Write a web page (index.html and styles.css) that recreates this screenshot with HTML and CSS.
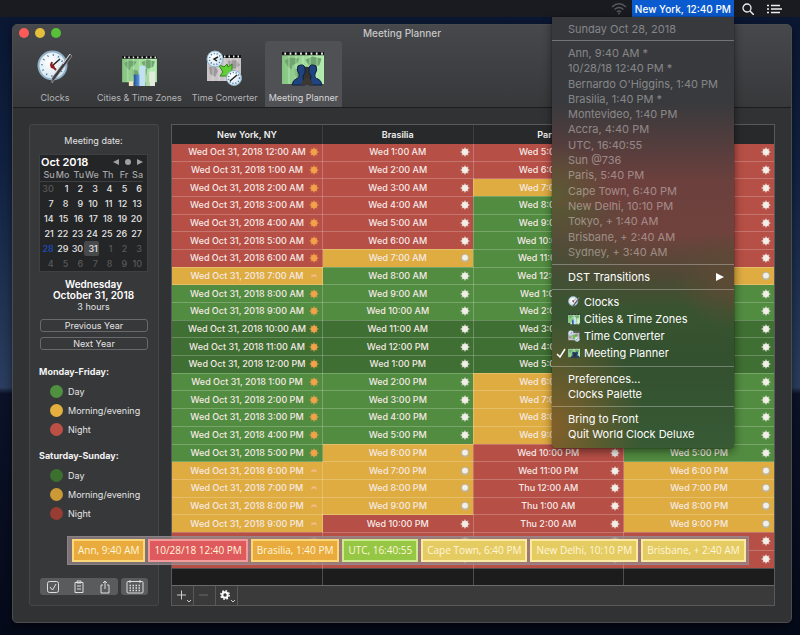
FILE: index.html
```html
<!DOCTYPE html>
<html lang="en">
<head>
    <meta charset="UTF-8">
    <meta name="viewport" content="width=device-width, initial-scale=1.0">
    <title>Meeting Planner</title>
    <link rel="stylesheet" href="styles.css">
</head>
<body>
    <svg class="symbols" aria-hidden="true">
        <linearGradient id="map-fill" x1="0" y1="0" x2="1" y2="0">
            <stop offset="0" stop-color="#86c482"/>
            <stop offset="1" stop-color="#b4edb0"/>
        </linearGradient>
        <linearGradient id="bar-fill" x1="0" y1="0" x2="1" y2="0">
            <stop offset="0" stop-color="#1f4f9a"/>
            <stop offset="1" stop-color="#6fa6e0"/>
        </linearGradient>
        <radialGradient id="clock-fill" cx="0.4" cy="0.35" r="0.7">
            <stop offset="0" stop-color="#ffffff"/>
            <stop offset="1" stop-color="#cfe3ee"/>
        </radialGradient>
        <symbol id="clocks" viewBox="0 0 36 36">
            <circle cx="15.500" cy="15.500" r="14" fill="url(#clock-fill)" stroke="#8fb0c6" stroke-width="2"/>
            <circle cx="15.500" cy="15.500" r="10.500" fill="none" stroke="#42729b" stroke-width="2" stroke-dasharray="1 4.500"/>
            <path d="M15 16l8-7" stroke="#222" stroke-width="1.500"/>
            <path d="M19 20l-5-5 1-3" fill="none" stroke="#8e1f1f" stroke-width="2"/>
            <circle cx="15.500" cy="16.500" r="2" fill="#8e1f1f"/>
            <path d="M33 4l2 2-17 23-3 4 0-5z" fill="#3b3b40" stroke="#9a9aa2" stroke-width="0.800"/>
            <path d="M33 4l-7 10" stroke="#d8d8de" stroke-width="1"/>
        </symbol>
        <symbol id="map" viewBox="0 0 36 30" preserveAspectRatio="none">
            <path d="M0 0h36v29H0z" fill="url(#map-fill)"/>
            <path d="M2 8l5-3 8 1-2 4-4 2-1 4-3-3zM11 15l5 1 1 4-4 6-2-5zM20 7l6-3 8 2-2 6-5 2-4-2zM20 13l6 1-1 8-3 1z" fill="#6fa56e"/>
            <path d="M6 3v26M12 3v26M18 3v26M24 3v26M30 3v26" stroke="#d3f4d0" stroke-width="0.500"/>
            <path d="M0 0h36v3H0z" fill="#111"/>
            <path d="M2 1.500h34" stroke="#eee" stroke-width="2" stroke-dasharray="1.500 3"/>
        </symbol>
        <symbol id="cities" viewBox="0 0 36 32">
            <use href="#map" x="0" y="1" width="36" height="28"/>
            <path d="M7 27h5v5H7z" fill="#f2e2bd"/>
            <path d="M12 20h7v12h-7z" fill="url(#bar-fill)"/>
            <path d="M18 11h6v21h-6z" fill="#c4e0f5"/>
            <path d="M24 21h4v11h-4z" fill="#a9d99f"/>
            <path d="M28 17h6v15h-6z" fill="#e2eadc"/>
        </symbol>
        <symbol id="converter" viewBox="0 0 37 36">
            <path d="M1 5h34v26H1z" fill="#c9c3c6"/>
            <path d="M3 17l6-1 3 5-3 6-5-3zM22 11l8-1 4 5-5 4-6-2z" fill="#9d999b"/>
            <path d="M7 8v23M13 8v23M19 8v23M25 8v23M31 8v23" stroke="#e8e4e6" stroke-width="0.600"/>
            <path d="M1 5h34v3H1z" fill="#111"/>
            <path d="M18 6.500h17" stroke="#eee" stroke-width="2" stroke-dasharray="1.500 3"/>
            <path d="M12 14l6 3 3-3 1 3 4-3v12H14l3-4z" fill="#62cf34" stroke="#2f8418"/>
            <circle cx="9" cy="9" r="8" fill="url(#clock-fill)" stroke="#8fb0c6"/>
            <circle cx="9" cy="9" r="5.500" fill="none" stroke="#42729b" stroke-width="1.500" stroke-dasharray="1 2"/>
            <path d="M12 7L8 9l3 2" fill="none" stroke="#222" stroke-width="1.500"/>
            <circle cx="28" cy="28" r="7.500" fill="url(#clock-fill)" stroke="#8fb0c6"/>
            <circle cx="28" cy="28" r="5.500" fill="none" stroke="#42729b" stroke-width="1.500" stroke-dasharray="1 2"/>
            <path d="M24 31l7-6" stroke="#222" stroke-width="1.500"/>
        </symbol>
        <symbol id="planner" viewBox="0 0 42 34">
            <use href="#map" x="0" y="0" width="42" height="33"/>
            <path d="M21 15h8l1 18H20z" fill="#35332f"/>
            <path d="M16 14q6-3 7 2 1 5-2 8 0 5 2 9H10q1-5 4-6 4-1 3-5-3-4-1-8z" fill="#1f4480" stroke="#10203c"/>
            <path d="M34 14q-6-3-7 2-1 5 2 8 0 5-2 9h13q-1-5-4-6-4-1-3-5 3-4 1-8z" fill="#1f4480" stroke="#10203c"/>
            <path d="M19 33q2-7 6-7t6 7z" fill="#3d3833"/>
        </symbol>
        <symbol id="sun" viewBox="0 0 12 12">
            <path d="M6 0L7.500 2.500 10.200 1.800 9.500 4.500 12 6 9.500 7.500 10.200 10.200 7.500 9.500 6 12 4.500 9.500 1.800 10.200 2.500 7.500 0 6 2.500 4.500 1.800 1.800 4.500 2.500z" fill="currentColor" opacity="0.700"/>
            <circle cx="6" cy="6" r="3.500" fill="currentColor"/>
        </symbol>
        <symbol id="haze" viewBox="0 0 12 12">
            <circle cx="6" cy="6" r="5" fill="#bdb59c"/>
            <circle cx="6" cy="5.500" r="3.500" fill="currentColor"/>
        </symbol>
        <symbol id="dusk" viewBox="0 0 12 12">
            <path d="M2.500 8q0-4 3.500-4t3.500 4q-3.500-3-7 0z" fill="currentColor"/>
        </symbol>
    </svg>

    <header class="menubar">
        <svg class="wifi" viewBox="0 0 16 13" aria-hidden="true">
            <path d="M1 5q7-6.500 14 0M3.500 7.500q4.500-4 9 0M6 10q2-2 4 0" fill="none" stroke="#55575b" stroke-width="1.500"/>
            <circle cx="8" cy="11.500" r="1" fill="#55575b"/>
        </svg>
        <div class="clock-item">
            <button type="button" class="clock-button">New York, 12:40 PM</button>
            <div class="menu">
                <p class="menu-date">Sunday Oct 28, 2018</p>
                <ul class="menu-times">
                    <li>Ann, 9:40 AM *</li>
                    <li>10/28/18 12:40 PM *</li>
                    <li>Bernardo O'Higgins, 1:40 PM</li>
                    <li>Brasilia, 1:40 PM *</li>
                    <li>Montevideo, 1:40 PM</li>
                    <li>Accra, 4:40 PM</li>
                    <li>UTC, 16:40:55</li>
                    <li>Sun @736</li>
                    <li>Paris, 5:40 PM</li>
                    <li>Cape Town, 6:40 PM</li>
                    <li>New Delhi, 10:10 PM</li>
                    <li>Tokyo, + 1:40 AM</li>
                    <li>Brisbane, + 2:40 AM</li>
                    <li>Sydney, + 3:40 AM</li>
                </ul>
                <div class="menu-group">
                    <button type="button" class="submenu">DST Transitions <svg viewBox="0 0 8 8" aria-hidden="true"><path d="M0 0l8 4-8 4z" fill="#fff"/></svg></button>
                </div>
                <div class="menu-group windows">
                    <button type="button"><svg aria-hidden="true"><use href="#clocks"/></svg>Clocks</button>
                    <button type="button"><svg aria-hidden="true"><use href="#cities"/></svg>Cities &amp; Time Zones</button>
                    <button type="button"><svg aria-hidden="true"><use href="#converter"/></svg>Time Converter</button>
                    <button type="button" class="checked"><svg class="check" viewBox="0 0 10 10" aria-hidden="true"><path d="M1 6l3 3 5-8" fill="none" stroke="#fff" stroke-width="1.500"/></svg><svg aria-hidden="true"><use href="#planner"/></svg>Meeting Planner</button>
                </div>
                <div class="menu-group plain">
                    <button type="button">Preferences...</button>
                    <button type="button">Clocks Palette</button>
                </div>
                <div class="menu-group plain">
                    <button type="button">Bring to Front</button>
                    <button type="button">Quit World Clock Deluxe</button>
                </div>
            </div>
        </div>
        <button type="button" class="bar-icon" aria-label="Search">
            <svg viewBox="0 0 12 12"><circle cx="5" cy="5" r="4" fill="none" stroke="#eee" stroke-width="1.300"/><path d="M8 8l4 4" stroke="#eee" stroke-width="1.500"/></svg>
        </button>
        <button type="button" class="bar-icon list" aria-label="Notifications">
            <svg viewBox="0 0 15 10"><path d="M0 1.500h2M0 5h2M0 8.500h2M4 1.500h9M4 5h11M4 8.500h9" stroke="#eee" stroke-width="1.500"/></svg>
        </button>
    </header>

    <main class="window">
        <div class="titlebar">
            <div class="title-row">
                <div class="lights">
                    <button type="button" class="light close" aria-label="Close"></button>
                    <button type="button" class="light minimize" aria-label="Minimize"></button>
                    <button type="button" class="light zoom" aria-label="Zoom"></button>
                </div>
                <h1>Meeting Planner</h1>
            </div>
            <nav class="tools">
                <button type="button" class="tool first"><svg width="36" height="36" aria-hidden="true"><use href="#clocks"/></svg>Clocks</button>
                <button type="button" class="tool"><svg width="35" height="31" aria-hidden="true"><use href="#cities"/></svg>Cities &amp; Time Zones</button>
                <button type="button" class="tool"><svg width="37" height="36" aria-hidden="true"><use href="#converter"/></svg>Time Converter</button>
                <button type="button" class="tool selected"><svg width="42" height="34" aria-hidden="true"><use href="#planner"/></svg>Meeting Planner</button>
            </nav>
        </div>

        <div class="content">
            <aside class="panel">
                <p class="panel-label">Meeting date:</p>
                <div class="calendar">
                    <div class="month">
                        <b>Oct 2018</b>
                        <button type="button" aria-label="Previous month"><svg viewBox="0 0 6 6"><path d="M6 0v6L0 3z"/></svg></button>
                        <button type="button" aria-label="Today"><svg viewBox="0 0 6 6"><circle cx="3" cy="3" r="3"/></svg></button>
                        <button type="button" aria-label="Next month"><svg viewBox="0 0 6 6"><path d="M0 0v6l6-3z"/></svg></button>
                    </div>
                    <table class="days">
                        <thead>
                            <tr><th>Su</th><th>Mo</th><th>Tu</th><th>We</th><th>Th</th><th>Fr</th><th>Sa</th></tr>
                        </thead>
                        <tbody>
                            <tr><td class="other">30</td><td>1</td><td>2</td><td>3</td><td>4</td><td>5</td><td>6</td></tr>
                            <tr><td>7</td><td>8</td><td>9</td><td>10</td><td>11</td><td>12</td><td>13</td></tr>
                            <tr><td>14</td><td>15</td><td>16</td><td>17</td><td>18</td><td>19</td><td>20</td></tr>
                            <tr><td>21</td><td>22</td><td>23</td><td>24</td><td>25</td><td>26</td><td>27</td></tr>
                            <tr><td class="today">28</td><td>29</td><td>30</td><td class="picked">31</td><td class="other">1</td><td class="other">2</td><td class="other">3</td></tr>
                            <tr><td class="other">4</td><td class="other">5</td><td class="other">6</td><td class="other">7</td><td class="other">8</td><td class="other">9</td><td class="other">10</td></tr>
                        </tbody>
                    </table>
                </div>
                <p class="chosen"><b>Wednesday<br>October 31, 2018</b><br>3 hours</p>
                <button type="button" class="year">Previous Year</button>
                <button type="button" class="year">Next Year</button>

                <h2>Monday-Friday:</h2>
                <ul class="legend">
                    <li class="day">Day</li>
                    <li class="edge">Morning/evening</li>
                    <li class="night">Night</li>
                </ul>
                <h2>Saturday-Sunday:</h2>
                <ul class="legend weekend">
                    <li class="day">Day</li>
                    <li class="edge">Morning/evening</li>
                    <li class="night">Night</li>
                </ul>

                <div class="actions">
                    <div class="segment">
                        <button type="button" aria-label="Reminder"><svg viewBox="0 0 14 14"><rect x="1.500" y="1.500" width="11" height="11" rx="2"/><path d="M4 7l2.500 3L10 4"/></svg></button>
                        <button type="button" aria-label="Copy"><svg viewBox="0 0 14 14"><path d="M3 2.500h8v10H3zM5 1h4v2H5zM5 6h4M5 9h4"/></svg></button>
                        <button type="button" aria-label="Share"><svg viewBox="0 0 14 14"><path d="M5 5H3v8h8V5H9M7 9V1M5 3l2-2 2 2"/></svg></button>
                    </div>
                    <button type="button" class="segment grid" aria-label="Calendar"><svg viewBox="0 0 18 14"><rect x="1" y="1.500" width="16" height="11.500" rx="1"/><path d="M4 0v3M14 0v3"/><path d="M3.500 5.500h12M3.500 8h12M3.500 10.500h12" stroke-width="1.500" stroke-dasharray="1.500 1.500"/></svg></button>
                </div>
            </aside>

            <section class="planner">
                <table class="hours">
                    <thead>
                        <tr><th>New York, NY</th><th>Brasilia</th><th>Paris</th><th></th></tr>
                    </thead>
                    <tbody id="hours"></tbody>
                    <tfoot>
                        <tr><td></td><td></td><td></td><td></td></tr>
                    </tfoot>
                </table>
                <div class="footbar">
                    <button type="button" aria-label="Add city"><svg viewBox="0 0 20 18"><path d="M5 9h9M9.500 4.500v9" stroke="#ccc"/><path d="M15 14l2 2 2-2" fill="none" stroke="#ccc"/></svg></button>
                    <button type="button" aria-label="Remove city"><svg viewBox="0 0 20 18"><path d="M5 9h9" stroke="#6a6a6a"/></svg></button>
                    <button type="button" aria-label="Options"><svg viewBox="0 0 20 18"><circle cx="9" cy="9" r="2.700" fill="none" stroke="#fff" stroke-width="2"/><circle cx="9" cy="9" r="4.200" fill="none" stroke="#fff" stroke-width="1.500" stroke-dasharray="1.650 1.650"/><path d="M15 14l2 2 2-2" fill="none" stroke="#ccc"/></svg></button>
                </div>
            </section>
        </div>
    </main>

    <div class="palette">
        <span class="orange">Ann, 9:40 AM</span>
        <span class="red">10/28/18 12:40 PM</span>
        <span class="orange">Brasilia, 1:40 PM</span>
        <span class="green">UTC, 16:40:55</span>
        <span class="yellow">Cape Town, 6:40 PM</span>
        <span class="yellow">New Delhi, 10:10 PM</span>
        <span class="yellow">Brisbane, + 2:40 AM</span>
    </div>

    <script src="script.js"></script>
</body>
</html>
```
FILE: script.js
```js
// offset is hours ahead of the first column, labels are the rows that carry a time
const columns = [
    { offset: 0, prefix: "Wed Oct 31, 2018", sun: "orange", labels: [0, 21] },
    { offset: 1, prefix: "Wed", sun: "white", labels: [0, 21] },
    { offset: 5, prefix: "Wed", sun: "white", labels: [0, 21] },
    { offset: 0, prefix: "Wed", sun: "white", labels: [17, 21] }
];

function formatHour(hour) {
    const suffix = hour < 12 ? "AM" : "PM";
    return (hour % 12 || 12) + ":00 " + suffix;
}

function shade(hour) {
    if (hour < 7 || hour > 21) return "night";
    if (hour === 7 || hour > 17) return "edge";
    return "day";
}

function icon(kind, sun) {
    if (kind !== "edge") return "sun";
    return sun === "orange" ? "dusk" : "haze";
}

const body = document.getElementById("hours");
for (let i = 0; i < 24; i++) {
    const row = document.createElement("tr");
    // the three hours of the meeting itself
    const meeting = i >= 10 && i <= 12;
    columns.forEach(c => {
        const total = i + c.offset;
        const hour = total % 24;
        const kind = shade(hour);
        const prefix = total > 23 ? "Thu" : c.prefix;
        const text = i >= c.labels[0] && i <= c.labels[1] ? prefix + " " + formatHour(hour) : "";
        const cell = document.createElement("td");
        cell.className = kind + (meeting ? " meeting" : "");
        cell.innerHTML = `<div class="slot"><span>${text}</span>` +
            `<svg class="${c.sun}" aria-hidden="true"><use href="#${icon(kind, c.sun)}"/></svg></div>`;
        row.appendChild(cell);
    });
    body.appendChild(row);
}
```
FILE: styles.css
```css
* {
    margin: 0;
    padding: 0;
    box-sizing: border-box;
}
body {
    display: flex;
    flex-direction: column;
    min-height: 100vh;
    position: relative;
    background: linear-gradient(#0a1631 0%, #10203f 25%, #2b3e5f 61%, #0c1228 62%, #050a1a 100%);
    color: #e4e4e4;
    font-family: Inter, "Liberation Sans", sans-serif;
    font-size: 10px;
}
button {
    border: 0;
    background: none;
    color: inherit;
    font: inherit;
}
ul {
    list-style: none;
}
table {
    border-collapse: collapse;
    table-layout: fixed;
    width: 100%;
}
.symbols {
    position: absolute;
    width: 0;
    height: 0;
}

/* menu bar */
.menubar {
    display: flex;
    align-items: center;
    justify-content: flex-end;
    position: relative;
    z-index: 3;
    height: 17px;
    padding-right: 18px;
    background: #191b21;
}
.wifi {
    width: 16px;
    height: 13px;
    margin-right: 5px;
}
.clock-item {
    position: relative;
    margin-right: 8px;
}
.clock-button {
    display: block;
    height: 17px;
    padding: 0 3px;
    background: #0a5bd0;
    color: #fff;
    font-size: 10px;
    font-weight: 500;
}
.bar-icon {
    display: flex;
    width: 12px;
    height: 12px;
}
.bar-icon svg {
    width: 100%;
    height: 100%;
}
.bar-icon.list {
    width: 15px;
    height: 10px;
    margin-left: 13px;
}
.menu {
    position: absolute;
    top: 100%;
    right: 0;
    width: 182px;
    padding: 4px 0 2px;
    border-radius: 0 0 4px 4px;
    background:
        radial-gradient(ellipse 90px 110px at 0% 95%, #83602a, transparent),
        radial-gradient(ellipse 60px 50px at 0% 41%, #5a5b33, transparent),
        radial-gradient(ellipse 60px 50px at 100% 61%, #5e4a35, transparent),
        linear-gradient(90deg, rgba(58, 86, 52, 0.5), transparent 50%) 0 190px no-repeat,
        linear-gradient(#37393d 0%, #393a3d 20%, #6b403d 38%, #70423d 50%, #4e4935 60%, #38542f 68%, #33502f 80%, #385a35 100%);
    box-shadow: 0 3px 10px rgba(0, 0, 0, 0.5), 0 0 1px #000;
    font-size: 11px;
    line-height: 16px;
}
.menu-date {
    padding: 0 16px 3px;
    color: #85868a;
}
.menu-times {
    display: flex;
    flex-direction: column;
    justify-content: space-between;
    height: 224px;
    padding: 5px 16px 4px;
    border-top: 1px solid rgba(255, 255, 255, 0.3);
    color: rgba(255, 255, 255, 0.4);
}
.menu-times li {
    line-height: 15px;
}
.menu-group {
    padding: 4px 0;
    border-top: 1px solid rgba(255, 255, 255, 0.3);
    color: #fff;
}
.menu-group button {
    display: flex;
    align-items: center;
    width: 100%;
    padding: 0 10px 0 16px;
    text-align: left;
}
.menu-group.plain {
    padding: 5px 0 4px;
    line-height: 15px;
}
.submenu {
    justify-content: space-between;
}
.submenu svg {
    width: 8px;
    height: 8px;
}
.menu-group.windows {
    padding: 3px 0 5px;
}
.windows button {
    height: 17px;
}
.windows svg {
    width: 12px;
    height: 12px;
    margin-right: 4px;
}
.windows .checked {
    padding-left: 4px;
}
.windows .check {
    width: 10px;
    height: 10px;
    margin-right: 2px;
}

/* window */
.window {
    display: flex;
    flex: 1;
    flex-direction: column;
    margin: 7px 8px 12px 12px;
    border: 1px solid #4b4c4e;
    border-radius: 5px;
    background: #313233;
    box-shadow: 0 4px 10px rgba(0, 0, 0, 0.5);
    overflow: hidden;
}
.titlebar {
    border-bottom: 1px solid #1c1c1d;
    background: linear-gradient(#47484b, #37383a);
}
.title-row {
    display: grid;
    grid-template-columns: 1fr auto 1fr;
    align-items: center;
    height: 16px;
    padding: 0 6px;
}
.title-row h1 {
    color: #c6c6c8;
    font-size: 10px;
    font-weight: 500;
}
.lights {
    display: flex;
    gap: 6px;
}
.light {
    width: 10px;
    height: 10px;
    border-radius: 50%;
}
.close {
    background: #fc5b57;
}
.minimize {
    background: #e5bf3c;
}
.zoom {
    background: #57c038;
}
.tools {
    display: flex;
    gap: 4px;
    padding-left: 18px;
}
.tool {
    display: flex;
    flex-direction: column;
    align-items: center;
    justify-content: flex-end;
    gap: 5px;
    height: 66px;
    padding: 0 3px 2px;
    color: #b4b5b8;
    font-size: 9px;
    line-height: 14px;
}
.tool.first {
    width: 48px;
    margin-right: 11px;
}
.tool.selected {
    padding: 0 4px 2px;
    border-radius: 3px 3px 0 0;
    background: #505154;
    color: #d8d8da;
}
.content {
    display: flex;
    flex: 1;
    gap: 12px;
    padding: 16px;
}

/* left panel */
.panel {
    display: flex;
    flex-direction: column;
    width: 130px;
    padding: 10px 10px 10px 9px;
    border: 1px solid #454648;
    border-radius: 3px;
    background: #37383a;
}
.panel-label {
    margin-bottom: 7px;
    font-size: 9px;
    line-height: 12px;
    text-align: center;
}
.calendar {
    padding-right: 4px;
    border: 1px solid #3f4042;
    background: #242527;
}
.month {
    display: flex;
    align-items: center;
    gap: 6px;
    height: 14px;
    padding-left: 1px;
}
.month b {
    flex: 1;
    color: #fff;
    font-size: 11px;
    font-weight: 600;
}
.month button {
    display: flex;
}
.month svg {
    width: 6px;
    height: 6px;
    fill: #a0a0a0;
}
.days {
    height: 102px;
    font-size: 9px;
    line-height: 12px;
}
.days th {
    border-bottom: 1px solid #3f4042;
    color: #a5a5a7;
    font-weight: 500;
    text-align: right;
}
.days td {
    padding-right: 1px;
    color: #e4e4e4;
    font-weight: 500;
    text-align: right;
}
.days .other {
    color: #58595b;
}
.days .today {
    color: #1c4fc4;
}
.days .picked {
    border-radius: 2px;
    background: #48494b;
}
.chosen {
    margin: 7px 0;
    font-size: 9px;
    line-height: 11px;
    text-align: center;
}
.chosen b {
    color: #fff;
    font-size: 10px;
    font-weight: 600;
}
.year {
    height: 13px;
    margin: 0 0 5px 1px;
    border: 1px solid #68696b;
    border-radius: 3px;
    font-size: 9px;
    line-height: 11px;
}
.panel h2 {
    margin-top: 10px;
    color: #f2f2f2;
    font-size: 9px;
    line-height: 14px;
}
.legend {
    padding: 3px 0 0 11px;
}
.legend li {
    display: flex;
    align-items: center;
    gap: 5px;
    height: 19px;
    font-size: 9px;
}
.legend li::before {
    content: "";
    width: 13px;
    height: 13px;
    border-radius: 50%;
}
.legend .day::before {
    background: #4f9140;
}
.legend .edge::before {
    background: #e6b03e;
}
.legend .night::before {
    background: #bc5045;
}
.weekend .day::before {
    background: #3c702f;
}
.weekend .edge::before {
    background: #cb9936;
}
.weekend .night::before {
    background: #973d34;
}
.actions {
    display: flex;
    justify-content: space-between;
    gap: 3px;
    margin: auto 0 0 1px;
}
.segment {
    display: flex;
    align-items: center;
    justify-content: space-around;
    flex: 1;
    height: 17px;
    border-radius: 3px;
    background: #5a5b5d;
}
.segment button {
    display: flex;
}
.segment svg {
    width: 14px;
    height: 14px;
    fill: none;
    stroke: #dedede;
}
.segment.grid {
    flex: none;
    width: 27px;
}
.segment.grid svg {
    width: 18px;
}

/* hours table */
.planner {
    display: flex;
    flex: 1;
    flex-direction: column;
    border: 1px solid #59595a;
}
.hours {
    flex: 1;
    height: 461px;
    background: #1c1c1c;
}
.hours th {
    height: 19px;
    border-right: 1px solid #3c3d3e;
    background: #28292a;
    color: #f0f0f0;
    font-size: 9px;
    font-weight: 600;
}
.hours td {
    border-right: 1px solid rgba(255, 255, 255, 0.22);
    border-bottom: 1px solid rgba(255, 255, 255, 0.22);
    color: #f6eae6;
    font-size: 9px;
    font-weight: 500;
}
.hours td:last-child,
.hours th:last-child {
    border-right: 0;
}
.hours tfoot td {
    height: 17px;
    border-bottom: 0;
}
.hours .night {
    background: #b64f46;
}
.hours .edge {
    background: #dfac41;
}
.hours .day {
    background: #528c41;
}
.hours .meeting {
    background: #3f6f32;
}
.slot {
    display: grid;
    grid-template-columns: 1fr auto 1fr;
    align-items: center;
    min-height: 12px;
    line-height: 12px;
}
.slot span {
    grid-column: 2;
    white-space: nowrap;
}
.slot svg {
    justify-self: end;
    width: 10px;
    height: 10px;
    margin-right: 3px;
}
.slot .orange {
    color: #f2a24a;
}
.edge .orange {
    color: #f0bb84;
}
.slot .white {
    color: #f2efe8;
}
.footbar {
    display: flex;
    height: 20px;
    border-top: 1px solid #6a6a6b;
    background: #3a3a3b;
}
.footbar button {
    display: flex;
    width: 22px;
    border-right: 1px solid #59595a;
}
.footbar svg {
    width: 20px;
    height: 18px;
}

/* floating clocks palette */
.palette {
    display: flex;
    gap: 3px;
    position: absolute;
    z-index: 2;
    left: 67px;
    bottom: 70px;
    padding: 2px 2px 2px 4px;
    border: 1px solid rgba(150, 140, 145, 0.6);
    background: rgba(150, 135, 140, 0.75);
    font-family: "Open Sans", Lato, sans-serif;
    font-size: 10px;
    line-height: 19px;
}
.palette span {
    padding: 0 4px;
    border: 2px solid;
    color: #fff6dc;
    white-space: nowrap;
}
.palette .orange {
    border-color: #fbd777;
    background: #e9ab3d;
}
.palette .red {
    border-color: #f39a9a;
    background: #df5a5c;
}
.palette .green {
    border-color: #cdea8c;
    background: #96c744;
}
.palette .yellow {
    border-color: #fbeaa0;
    background: #e5cc62;
}
```
